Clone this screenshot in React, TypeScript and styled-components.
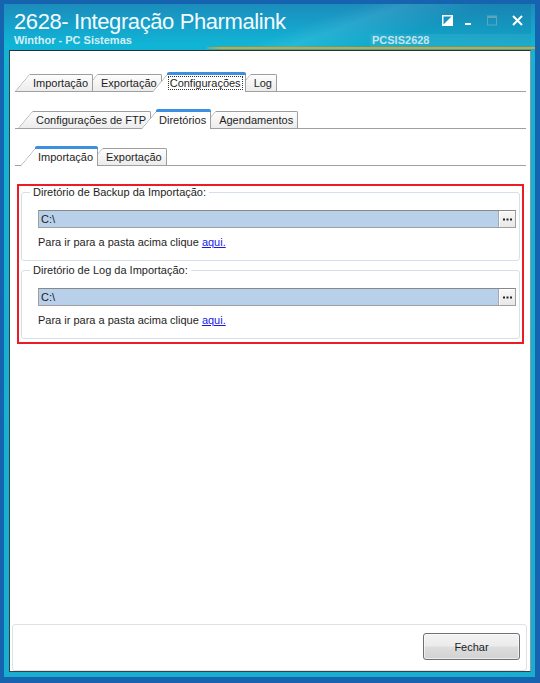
import React from 'react'
import styled, { createGlobalStyle } from 'styled-components'

const GlobalStyle = createGlobalStyle`
  html, body {
    margin: 0;
    padding: 0;
    background: #ffffff;
  }
  body {
    font-family: "Liberation Sans", Arial, sans-serif;
  }
`

const Window = styled.div`
  width: 540px;
  height: 683px;
  box-sizing: border-box;
  padding: 4px 5px 6px 4px;
  background: #1664b0;
  display: flex;
`

const Frame = styled.div`
  flex: 1;
  display: flex;
  flex-direction: column;
  padding: 0 4px 5px 5px;
  background: linear-gradient(180deg, #1b8cbc 0px, #17a0c9 20px, #10b4d5 40px, #14b3d3 60px, #18aed0 100%);
`

const TitleBar = styled.div`
  height: 43px;
  box-sizing: border-box;
  padding: 6px 8px 0 5px;
  display: flex;
  flex-direction: column;
  background: linear-gradient(160deg, rgba(255, 255, 255, 0) 55%, rgba(255, 255, 255, 0.08) 62%, rgba(0, 40, 80, 0.08) 75%, rgba(0, 40, 80, 0.12) 100%);
`

const TitleRow = styled.div`
  display: flex;
  align-items: center;
  justify-content: space-between;
`

const Title = styled.div`
  font-family: "Liberation Sans", Arial, sans-serif;
  font-size: 22px;
  letter-spacing: -0.4px;
  line-height: 24px;
  color: #f4fbfd;
`

const Controls = styled.div`
  display: flex;
  align-items: center;
  margin-top: -4px;
`

const ControlIcon = styled.svg<{ $ml: number }>`
  display: block;
  margin-left: ${p => p.$ml}px;
`

const SubRow = styled.div`
  display: flex;
  align-items: center;
  height: 13px;
`

const Subtitle = styled.div`
  font-size: 11px;
  font-weight: bold;
  line-height: 13px;
  color: #d3eef6;
`

const Badge = styled.div`
  margin-left: auto;
  margin-right: -8px;
  width: 161px;
  padding-left: 2px;
  box-sizing: border-box;
  font-size: 11px;
  font-weight: bold;
  line-height: 13px;
  color: #c4e4ee;
  background: rgba(255, 255, 255, 0.07);
`

const AccentLine = styled.div`
  height: 2px;
  margin: 0 -4px 1px 198px;
  background: linear-gradient(90deg, rgba(243, 156, 18, 0.4) 0px, #f39c12 14px, #f29a14 100%);
`

const Client = styled.div`
  flex: 1;
  display: flex;
  flex-direction: column;
  background: #ffffff;
  border: 1px solid #34424c;
  border-right-color: #8e9aa2;
  border-top-color: #25323a;
`

const TabStrip = styled.div<{ $indent: number; $top: number }>`
  display: flex;
  align-items: flex-end;
  height: 20px;
  margin: ${p => p.$top}px 4px 0 5px;
  padding-left: ${p => p.$indent}px;
  border-bottom: 1px solid #a0a0a0;
`

const Tab = styled.div<{ $active?: boolean; $z: number }>`
  position: relative;
  z-index: ${p => (p.$active ? 20 : p.$z)};
  height: ${p => (p.$active ? 19 : 17)}px;
  margin-left: 5px;
  margin-bottom: ${p => (p.$active ? -1 : 0)}px;
  padding: 0 4px 0 3px;
  display: flex;
  align-items: center;
  box-sizing: border-box;
  font-size: 11px;
  color: #1e1e1e;
  white-space: nowrap;
  background: ${p => (p.$active ? '#ffffff' : 'linear-gradient(180deg, #fdfdfd, #ececec)')};
  border-top: 1px solid #9e9e9e;
  border-right: 1px solid #9e9e9e;
  border-top-right-radius: 2px;

  &:first-child {
    margin-left: 0;
  }

  &::before {
    content: '';
    position: absolute;
    z-index: -1;
    top: -1px;
    bottom: 0;
    left: -15px;
    width: 19px;
    background: inherit;
    border-top: 1px solid #9e9e9e;
    border-left: 1px solid #9e9e9e;
    border-top-left-radius: 2px;
    transform: skewX(-40deg);
    transform-origin: bottom left;
  }

  &::after {
    content: '';
    display: ${p => (p.$active ? 'block' : 'none')};
    position: absolute;
    top: -2px;
    left: 0;
    right: -1px;
    height: 3px;
    border-radius: 2px 2px 0 0;
    background: #3d8fe0;
  }
`

const Focus = styled.span`
  outline: 1px dotted #333333;
  outline-offset: 0;
  padding: 0 1px;
  margin: 0 -1px;
`

const Highlight = styled.div`
  margin: 18px 6px 0 7px;
  padding: 0 2px 3px 2px;
  border: 2px solid #ec1c24;
  display: flex;
  flex-direction: column;
  gap: 3px;
`

const Group = styled.fieldset`
  margin: 0;
  padding: 0 3px 11px 16px;
  border: 1px solid #d6e0ea;
  border-radius: 3px;
  min-width: 0;
`

const Legend = styled.legend`
  margin-left: -8px;
  padding: 0 3px;
  font-size: 11px;
  line-height: 13px;
  color: #1e1e1e;
`

const Field = styled.div`
  margin-top: 11px;
  height: 18px;
  box-sizing: border-box;
  display: flex;
  align-items: stretch;
  border: 1px solid #a0a0a0;
  border-top-color: #888888;
  background: #b9d0ea;
`

const FieldValue = styled.div`
  flex: 1;
  padding-left: 2px;
  font-size: 11px;
  line-height: 16px;
  color: #202020;
`

const BrowseButton = styled.div`
  width: 16px;
  display: flex;
  align-items: center;
  justify-content: center;
  border-left: 1px solid #a8a8a8;
  background: linear-gradient(180deg, #f8f8f8, #e8e8e8);
  box-shadow: inset 1px 1px 0 #ffffff;
`

const Hint = styled.div`
  margin-top: 8px;
  font-size: 11px;
  line-height: 13px;
  color: #1e1e1e;
`

const Link = styled.a`
  color: #1a1ae6;
  text-decoration: underline;
  cursor: pointer;
`

const BottomBar = styled.div`
  margin: auto 3px 0 2px;
  height: 47px;
  box-sizing: border-box;
  display: flex;
  align-items: flex-start;
  justify-content: flex-end;
  padding: 8px 6px 0 0;
  border: 1px solid #dde2e8;
  border-radius: 3px;
`

const Button = styled.button`
  width: 97px;
  height: 27px;
  border: 1px solid #707070;
  border-radius: 3px;
  background: linear-gradient(180deg, #f3f3f3 0%, #ebebeb 48%, #dddddd 52%, #d2d2d2 100%);
  box-shadow: inset 0 0 0 1px rgba(255, 255, 255, 0.6);
  font-family: "Liberation Sans", Arial, sans-serif;
  font-size: 11px;
  color: #1e1e1e;
  padding: 0;
`

type TabDef = { label: string; active?: boolean; focus?: boolean }

const TabRow = ({ tabs, indent, top }: { tabs: TabDef[]; indent: number; top: number }) => (
  <TabStrip $indent={indent} $top={top}>
    {tabs.map((t, i) => (
      <Tab key={t.label} $active={t.active} $z={tabs.length - i}>
        {t.focus ? <Focus>{t.label}</Focus> : t.label}
      </Tab>
    ))}
  </TabStrip>
)

const Dots = () => (
  <svg width="9" height="3" viewBox="0 0 9 3">
    <rect x="0" y="0.5" width="2" height="2" fill="#222" />
    <rect x="3.5" y="0.5" width="2" height="2" fill="#222" />
    <rect x="7" y="0.5" width="2" height="2" fill="#222" />
  </svg>
)

const DirectoryGroup = ({ title }: { title: string }) => (
  <Group>
    <Legend>{title}</Legend>
    <Field>
      <FieldValue>C:\</FieldValue>
      <BrowseButton>
        <Dots />
      </BrowseButton>
    </Field>
    <Hint>
      Para ir para a pasta acima clique <Link>aqui.</Link>
    </Hint>
  </Group>
)

export default function App() {
  return (
    <>
      <GlobalStyle />
      <Window>
        <Frame>
          <TitleBar>
            <TitleRow>
              <Title>2628- Integração Pharmalink</Title>
              <Controls>
                <ControlIcon $ml={0} width="11" height="11" viewBox="0 0 11 11">
                  <rect x="0.75" y="0.75" width="9.5" height="9.5" fill="none" stroke="#fff" strokeWidth="1.5" />
                  <polygon points="1,10 10,1 10,10" fill="#fff" />
                </ControlIcon>
                <ControlIcon $ml={12} width="6" height="11" viewBox="0 0 6 11">
                  <rect x="0" y="8" width="6" height="2" fill="#fff" />
                </ControlIcon>
                <ControlIcon $ml={16} width="10" height="11" viewBox="0 0 10 11">
                  <rect x="0.5" y="1" width="9" height="9" fill="none" stroke="#5aa7ba" strokeWidth="1" />
                  <rect x="0.5" y="1" width="9" height="2" fill="#5aa7ba" />
                </ControlIcon>
                <ControlIcon $ml={15} width="11" height="11" viewBox="0 0 11 11">
                  <path d="M1 1 L10 10 M10 1 L1 10" stroke="#fff" strokeWidth="2" />
                </ControlIcon>
              </Controls>
            </TitleRow>
            <SubRow>
              <Subtitle>Winthor - PC Sistemas</Subtitle>
              <Badge>PCSIS2628</Badge>
            </SubRow>
          </TitleBar>
          <AccentLine />
          <Client>
            <TabRow
              top={20}
              indent={15}
              tabs={[
                { label: 'Importação' },
                { label: 'Exportação' },
                { label: 'Configurações', active: true, focus: true },
                { label: 'Log' },
              ]}
            />
            <TabRow
              top={16}
              indent={18}
              tabs={[
                { label: 'Configurações de FTP' },
                { label: 'Diretórios', active: true },
                { label: 'Agendamentos' },
              ]}
            />
            <TabRow
              top={16}
              indent={20}
              tabs={[{ label: 'Importação', active: true }, { label: 'Exportação' }]}
            />
            <Highlight>
              <DirectoryGroup title="Diretório de Backup da Importação:" />
              <DirectoryGroup title="Diretório de Log da Importação:" />
            </Highlight>
            <BottomBar>
              <Button>Fechar</Button>
            </BottomBar>
          </Client>
        </Frame>
      </Window>
    </>
  )
}
